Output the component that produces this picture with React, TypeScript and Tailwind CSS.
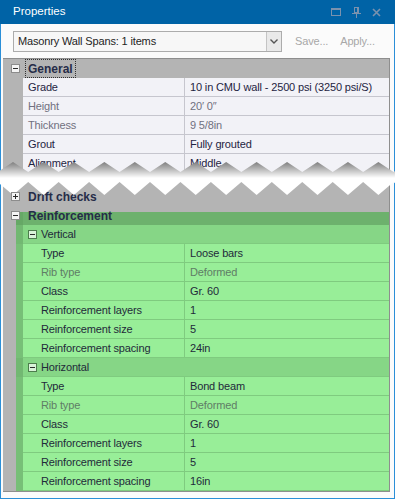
import React from 'react'

type Prop = { name: string; value: string; readonly?: boolean }

const FONT = "font-['Liberation_Sans',Arial,sans-serif]"

const general: Prop[] = [
	{ name: 'Grade', value: '10 in CMU wall - 2500 psi (3250 psi/S)' },
	{ name: 'Height', value: '20\u2032 0\u2033', readonly: true },
	{ name: 'Thickness', value: '9 5/8in', readonly: true },
	{ name: 'Grout', value: 'Fully grouted' },
	{ name: 'Alignment', value: 'Middle' },
]

const vertical: Prop[] = [
	{ name: 'Type', value: 'Loose bars' },
	{ name: 'Rib type', value: 'Deformed', readonly: true },
	{ name: 'Class', value: 'Gr. 60' },
	{ name: 'Reinforcement layers', value: '1' },
	{ name: 'Reinforcement size', value: '5' },
	{ name: 'Reinforcement spacing', value: '24in' },
]

const horizontal: Prop[] = [
	{ name: 'Type', value: 'Bond beam' },
	{ name: 'Rib type', value: 'Deformed', readonly: true },
	{ name: 'Class', value: 'Gr. 60' },
	{ name: 'Reinforcement layers', value: '1' },
	{ name: 'Reinforcement size', value: '5' },
	{ name: 'Reinforcement spacing', value: '16in' },
]

function Expander({ open, green = false }: { open: boolean; green?: boolean }) {
	return (
		<span
			className={
				green
					? 'relative z-10 flex h-[9px] w-[9px] shrink-0 items-center justify-center border border-[#4d7d4d] bg-[#d8f3d8]'
					: 'relative z-10 flex h-[9px] w-[9px] shrink-0 items-center justify-center border border-[#8c8c8c] bg-[#f4f4f4]'
			}
		>
			<span className="h-px w-[5px] bg-[#2a2a2a]" />
			{!open && <span className="absolute h-[5px] w-px bg-[#2a2a2a]" />}
		</span>
	)
}

function TitleBar() {
	return (
		<div className="flex h-[24px] shrink-0 items-center bg-[#0063a6] pl-[13px] pr-[14px] text-white">
			<span className="flex-1 text-[11.5px]">Properties</span>
			<div className="flex items-center gap-[11px] text-[#7a92ae]">
				<svg width="10" height="8" viewBox="0 0 10 8">
					<rect x="0.5" y="0.5" width="9" height="7" fill="none" stroke="currentColor" />
					<rect x="0" y="0" width="10" height="2" fill="currentColor" />
				</svg>
				<svg width="9" height="11" viewBox="0 0 9 11">
					<rect x="2.5" y="0.5" width="4" height="5" fill="none" stroke="currentColor" />
					<rect x="5" y="0" width="2" height="6" fill="currentColor" />
					<rect x="0" y="6" width="9" height="1" fill="currentColor" />
					<rect x="4" y="7" width="1" height="4" fill="currentColor" />
				</svg>
				<svg width="9" height="9" viewBox="0 0 9 9">
					<path d="M1 1 L8 8 M8 1 L1 8" stroke="currentColor" strokeWidth="1.6" />
				</svg>
			</div>
		</div>
	)
}

function Toolbar() {
	return (
		<div className="flex items-center pt-[7px] text-[11px] tracking-[-0.15px]">
			<div className="ml-[10px] flex h-[21px] w-[269px] border border-[#acacac] bg-[#f7f7f7]">
				<span className="flex flex-1 items-center whitespace-nowrap pl-[4px] text-[#1e1e1e]">
					Masonry Wall Spans: 1 items
				</span>
				<span className="flex w-[15px] items-center justify-center border-l border-[#c4c4c4] bg-[#e9e9e9]">
					<svg width="8" height="5" viewBox="0 0 8 5">
						<path d="M0.5 0.5 L4 4 L7.5 0.5" fill="none" stroke="#555" strokeWidth="1.4" />
					</svg>
				</span>
			</div>
			<span className="ml-[13px] whitespace-nowrap text-[#a8a8a8]">Save...</span>
			<span className="ml-[12px] whitespace-nowrap text-[#a8a8a8]">Apply...</span>
		</div>
	)
}

function GrayRow({ p }: { p: Prop }) {
	const tone = p.readonly ? 'text-[#707080]' : 'text-[#1f2442]'
	return (
		<div className="flex h-[19px]">
			<div className="w-[20px] shrink-0 bg-[#b4b4b4]" />
			<div className="flex flex-1 border-b border-[#c6c6ce] bg-[#f2f2f7]">
				<div className={`flex w-[162px] shrink-0 items-center whitespace-nowrap border-r border-[#c6c6ce] pl-[5px] ${tone}`}>
					{p.name}
				</div>
				<div className={`flex flex-1 items-center whitespace-nowrap pl-[5px] ${tone}`}>{p.value}</div>
			</div>
		</div>
	)
}

function GreenRow({ p }: { p: Prop }) {
	const tone = p.readonly ? 'text-[#5f7d66]' : 'text-[#1f2a3a]'
	return (
		<div className="flex h-[19px]">
			<div className="w-[13px] shrink-0 bg-[#b4b4b4]" />
			<div className="w-[7px] shrink-0 bg-[#77bf77]" />
			<div className="flex flex-1 border-b border-[#7fcb7f] bg-[#98ee98]">
				<div className={`flex w-[162px] shrink-0 items-center whitespace-nowrap border-r border-[#7fcb7f] pl-[18px] ${tone}`}>
					{p.name}
				</div>
				<div className={`flex flex-1 items-center whitespace-nowrap pl-[5px] ${tone}`}>{p.value}</div>
			</div>
		</div>
	)
}

function SubCategory({ label }: { label: string }) {
	return (
		<div className="flex h-[19px]">
			<div className="w-[13px] shrink-0 bg-[#b4b4b4]" />
			<div className="w-[7px] shrink-0 bg-[#72b872]" />
			<div className="flex flex-1 items-center gap-[4px] border-b border-[#7fcb7f] bg-[#86d686] pl-[5px] text-[#1f2a3a]">
				<Expander open green />
				<span>{label}</span>
			</div>
		</div>
	)
}

function Grid() {
	return (
		<div className="mt-[6px] flex flex-col border-y border-r border-[#8e8e8e] bg-[#b4b4b4] text-[11px] tracking-[-0.15px]">
			{/* general */}
			<div className="flex h-[19px] items-center bg-[#b4b4b4]">
				<div className="flex w-[20px] shrink-0 pl-[8px]">
					<Expander open />
				</div>
				<span className="ml-[2px] flex h-full items-center border border-dotted border-[#303030] px-[2px] text-[12px] font-bold tracking-normal text-[#262c48]">
					General
				</span>
			</div>
			{general.map((p) => (
				<GrayRow key={p.name} p={p} />
			))}

			{/* drift checks, partly under the tear */}
			<div className="h-[14px] bg-[#b4b4b4]" />
			<div className="flex h-[19px] items-center bg-[#b4b4b4]">
				<div className="flex w-[20px] shrink-0 pl-[8px]">
					<Expander open={false} />
				</div>
				<span className="pl-[5px] text-[12px] font-bold tracking-normal text-[#262c48]">Drift checks</span>
			</div>

			{/* reinforcement */}
			<div className="flex h-[19px] items-center">
				<div className="flex h-full w-[13px] shrink-0 items-center bg-[#b4b4b4] pl-[8px]">
					<Expander open />
				</div>
				<div className="h-full w-[7px] shrink-0 bg-[linear-gradient(to_bottom,#b4b4b4_6px,#66a866_6px)]" />
				<div className="flex h-full flex-1 items-center bg-[linear-gradient(to_bottom,#b4b4b4_6px,#6db16d_6px)] pl-[5px] text-[12px] font-bold tracking-normal text-[#262c48]">
					Reinforcement
				</div>
			</div>
			<SubCategory label="Vertical" />
			{vertical.map((p) => (
				<GreenRow key={'v' + p.name} p={p} />
			))}
			<SubCategory label="Horizontal" />
			{horizontal.map((p) => (
				<GreenRow key={'h' + p.name} p={p} />
			))}
		</div>
	)
}

function TornEdge() {
	const top: string[] = []
	const bottom: string[] = []
	for (let k = -1; k <= 13; k++) {
		const x = 13 + k * 30.45
		top.push(`${x},7`, `${x + 15.2},17`)
		bottom.unshift(`${x},40`)
		bottom.unshift(`${x + 15.2},27`)
	}
	return (
		<svg className="absolute left-0 top-[155px]" width="395" height="45" viewBox="0 0 395 45">
			<defs>
				<linearGradient id="tear" x1="0" y1="7" x2="0" y2="23" gradientUnits="userSpaceOnUse">
					<stop offset="0" stopColor="#7f7f7f" />
					<stop offset="1" stopColor="#ffffff" />
				</linearGradient>
			</defs>
			<polygon points={[...top, ...bottom].join(' ')} fill="url(#tear)" />
		</svg>
	)
}

export default function App() {
	return (
		<div className={`relative flex h-[499px] w-[395px] flex-col overflow-hidden bg-white text-[12px] ${FONT}`}>
			<TitleBar />
			<div className="flex flex-1 flex-col border-x border-b border-[#2b8fd8] bg-[#fbfbfb] pl-[2px] pr-[4px]">
				<Toolbar />
				<Grid />
			</div>
			<TornEdge />
		</div>
	)
}
